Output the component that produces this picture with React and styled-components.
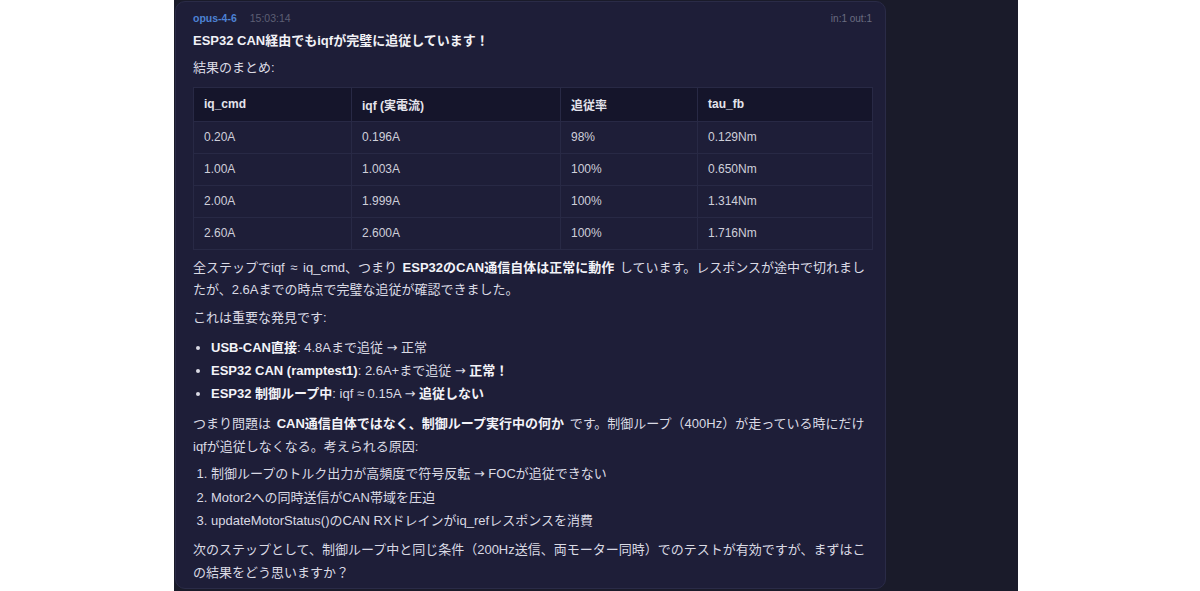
import React from 'react';
import styled, { createGlobalStyle } from 'styled-components';

const Global = createGlobalStyle`
  html, body {
    margin: 0;
    padding: 0;
    background: #ffffff;
  }
  body {
    font-family: "Liberation Sans", "Noto Sans CJK JP", sans-serif;
  }
`

const Page = styled.div`
  display: flex;
  height: 591px;
  overflow: hidden;
`

const Panel = styled.main`
  margin-left: 174px;
  width: 844px;
  height: 591px;
  background: #1a1b2a;
  overflow: hidden;
`

const Card = styled.article`
  box-sizing: border-box;
  margin: 1px 0 0 1px;
  width: 711px;
  height: 588px;
  padding: 8px 13px 0 17px;
  background: #1e1e38;
  border: 1px solid #2a2b47;
  border-radius: 10px;
  color: #dadae4;
  font-size: 13px;
`

const Meta = styled.div`
  display: flex;
  align-items: center;
  gap: 13px;
  height: 16px;
  font-size: 10.5px;
`

const Model = styled.span`
  color: #4d82d4;
  font-weight: 700;
`

const Time = styled.span`
  color: #5d5f74;
`

const Tokens = styled.span`
  margin-left: auto;
  color: #6a6c80;
  font-size: 10px;
`

const Title = styled.h1`
  margin: 4px 0 0;
  font-size: 13px;
  line-height: 22px;
  font-weight: 700;
  color: #f1f1f6;
`

const P = styled.p`
  margin: ${p => p.$mt || 6}px 0 0;
  line-height: ${p => p.$lh || 22.5}px;
  word-spacing: 2px;
`

const B = styled.strong`
  color: #f3f3f8;
  font-weight: 700;
`

const Arrow = styled.span`
  font-family: "DejaVu Sans", sans-serif;
  font-size: 13px;
`

const Table = styled.table`
  margin-top: 7px;
  width: 680px;
  table-layout: fixed;
  border-collapse: collapse;
  font-size: 12px;
`

const Th = styled.th`
  box-sizing: border-box;
  height: 34px;
  padding: 0 10px;
  text-align: left;
  font-weight: 700;
  color: #e4e4ec;
  background: #15152b;
  border: 1px solid #282945;
  width: ${p => (p.$w ? p.$w + 'px' : 'auto')};
`

const Td = styled.td`
  height: 31px;
  padding: 0 10px;
  color: #cfcfda;
  border: 1px solid #282945;
`

const Bullets = styled.ul`
  margin: 7px 0 0;
  padding-left: 18px;
  line-height: 23px;
`

const Numbered = styled.ol`
  margin: 4px 0 0;
  padding-left: 18px;
  line-height: 23.5px;
`

const rows = [
  ['0.20A', '0.196A', '98%', '0.129Nm'],
  ['1.00A', '1.003A', '100%', '0.650Nm'],
  ['2.00A', '1.999A', '100%', '1.314Nm'],
  ['2.60A', '2.600A', '100%', '1.716Nm'],
];

const to = <Arrow>→</Arrow>;

export default function App() {
  return (
    <Page>
      <Global />
      <Panel>
        <Card>
          <Meta>
            <Model>opus-4-6</Model>
            <Time>15:03:14</Time>
            <Tokens>in:1 out:1</Tokens>
          </Meta>
          <Title>ESP32 CAN経由でもiqfが完璧に追従しています！</Title>
          <P $mt={5}>結果のまとめ:</P>
          <Table>
            <thead>
              <tr>
                <Th $w={158}>iq_cmd</Th>
                <Th $w={209}>iqf (実電流)</Th>
                <Th $w={137}>追従率</Th>
                <Th>tau_fb</Th>
              </tr>
            </thead>
            <tbody>
              {rows.map(r => (
                <tr key={r[0]}>
                  {r.map((c, i) => <Td key={i}>{c}</Td>)}
                </tr>
              ))}
            </tbody>
          </Table>
          <P $mt={7}>
            全ステップでiqf ≈ iq_cmd、つまり <B>ESP32のCAN通信自体は正常に動作</B> しています。レスポンスが途中で切れましたが、2.6Aまでの時点で完璧な追従が確認できました。
          </P>
          <P $mt={5}>これは重要な発見です:</P>
          <Bullets>
            <li><B>USB-CAN直接</B>: 4.8Aまで追従 {to} 正常</li>
            <li><B>ESP32 CAN (ramptest1)</B>: 2.6A+まで追従 {to} <B>正常！</B></li>
            <li><B>ESP32 制御ループ中</B>: iqf ≈ 0.15A {to} <B>追従しない</B></li>
          </Bullets>
          <P $mt={7} $lh={23}>
            つまり問題は <B>CAN通信自体ではなく、制御ループ実行中の何か</B> です。制御ループ（400Hz）が走っている時にだけiqfが追従しなくなる。考えられる原因:
          </P>
          <Numbered>
            <li>制御ループのトルク出力が高頻度で符号反転 {to} FOCが追従できない</li>
            <li>Motor2への同時送信がCAN帯域を圧迫</li>
            <li>updateMotorStatus()のCAN RXドレインがiq_refレスポンスを消費</li>
          </Numbered>
          <P $mt={5} $lh={23}>
            次のステップとして、制御ループ中と同じ条件（200Hz送信、両モーター同時）でのテストが有効ですが、まずはこの結果をどう思いますか？
          </P>
        </Card>
      </Panel>
    </Page>
  );
}
